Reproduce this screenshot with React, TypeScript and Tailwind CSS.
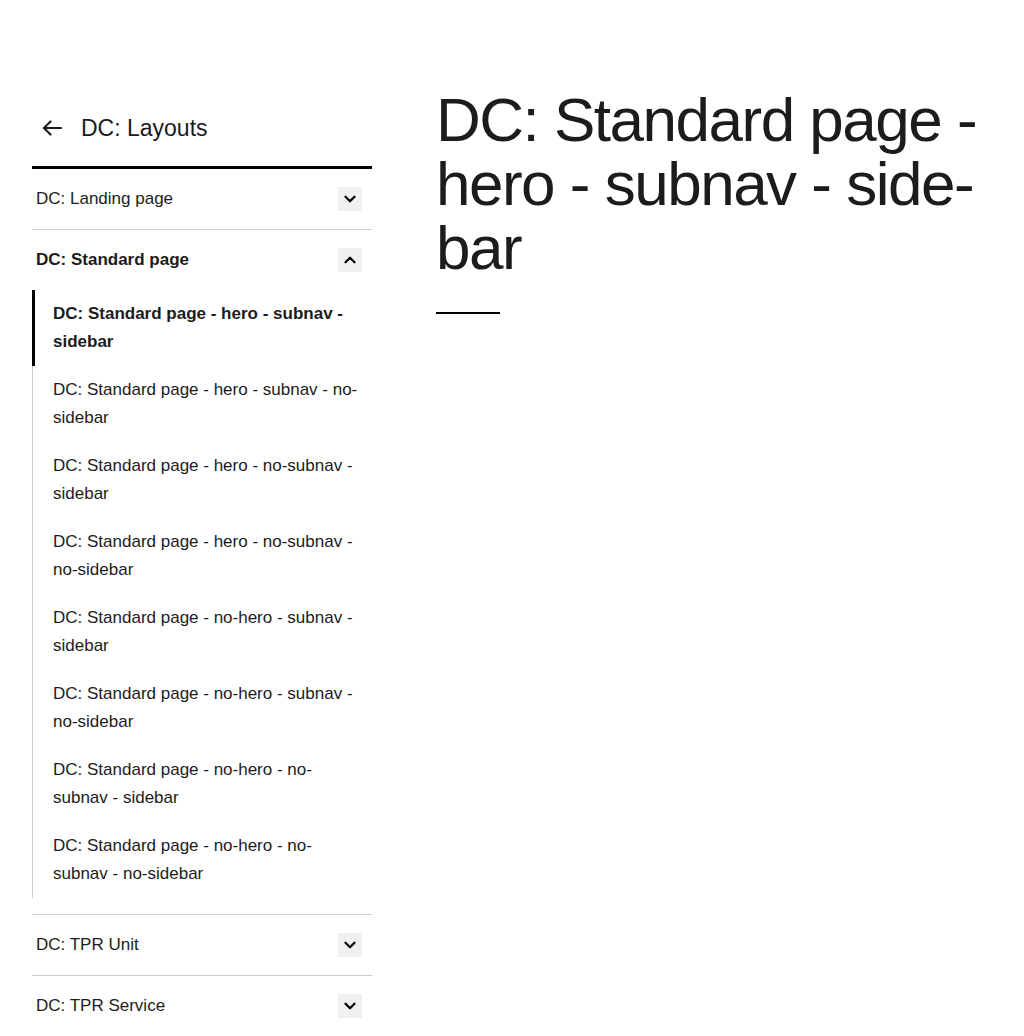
import { ChevronDown, ChevronUp } from "lucide-react";

const subItems: [string, string][] = [
  ["DC: Standard page - hero - subnav -", "sidebar"],
  ["DC: Standard page - hero - subnav - no-", "sidebar"],
  ["DC: Standard page - hero - no-subnav -", "sidebar"],
  ["DC: Standard page - hero - no-subnav -", "no-sidebar"],
  ["DC: Standard page - no-hero - subnav -", "sidebar"],
  ["DC: Standard page - no-hero - subnav -", "no-sidebar"],
  ["DC: Standard page - no-hero - no-", "subnav - sidebar"],
  ["DC: Standard page - no-hero - no-", "subnav - no-sidebar"],
];

const Toggle = ({ open }: { open?: boolean }) => (
  <span className="w-6 h-6 bg-[#f0f0f0] flex items-center justify-center">
    {open ? (
      <ChevronUp className="w-[18px] h-[18px] text-black" strokeWidth={3} />
    ) : (
      <ChevronDown className="w-[18px] h-[18px] text-black" strokeWidth={3} />
    )}
  </span>
);

const Section = ({ label, open, bold }: { label: string; open?: boolean; bold?: boolean }) => (
  <div className="h-[60px] pl-1 pr-[10px] flex items-center justify-between">
    <span className={`text-[17px] ${bold ? "font-bold" : ""}`}>{label}</span>
    <Toggle open={open} />
  </div>
);

export default function App() {
  return (
    <div className="min-h-screen bg-white text-[#1c1c1c] font-['Liberation_Sans',Arial,sans-serif] px-8 pt-[88px]">
      <div className="flex gap-16">
        <aside className="w-[340px] shrink-0">
          <div className="flex items-center gap-[19px] pl-[10px] pt-6 pb-[22px] border-b-[3px] border-black">
            <svg width="20" height="16" viewBox="0 0 20 16" fill="none" stroke="currentColor" strokeWidth="2.2" strokeLinecap="round" strokeLinejoin="round">
              <path d="M19 8H2" />
              <path d="M8.5 1.5L2 8l6.5 6.5" />
            </svg>
            <span className="text-[23px] leading-8">DC: Layouts</span>
          </div>
          <div className="border-b border-[#cccccc]">
            <Section label="DC: Landing page" />
          </div>
          <div className="border-b border-[#cccccc] pb-4">
            <Section label="DC: Standard page" open bold />
            <ul className="border-l border-[#cccccc]">
              {subItems.map(([a, b], i) => (
                <li
                  key={i}
                  className={`py-[10px] pr-2 text-[17px] leading-7 ${
                    i === 0 ? "font-bold border-l-[3px] border-black -ml-px pl-[18px]" : "pl-5"
                  }`}
                >
                  <span className="block whitespace-nowrap">{a}</span>
                  <span className="block whitespace-nowrap">{b}</span>
                </li>
              ))}
            </ul>
          </div>
          <div className="border-b border-[#cccccc]">
            <Section label="DC: TPR Unit" />
          </div>
          <div className="border-b border-[#cccccc]">
            <Section label="DC: TPR Service" />
          </div>
        </aside>
        <main className="flex-1">
          <h1 className="text-[62px] leading-[64px] tracking-[-1.5px]">
            DC: Standard page - hero - subnav - side{"\u00AD"}bar
          </h1>
          <div className="w-16 h-[2px] bg-black mt-8" />
        </main>
      </div>
    </div>
  );
}
